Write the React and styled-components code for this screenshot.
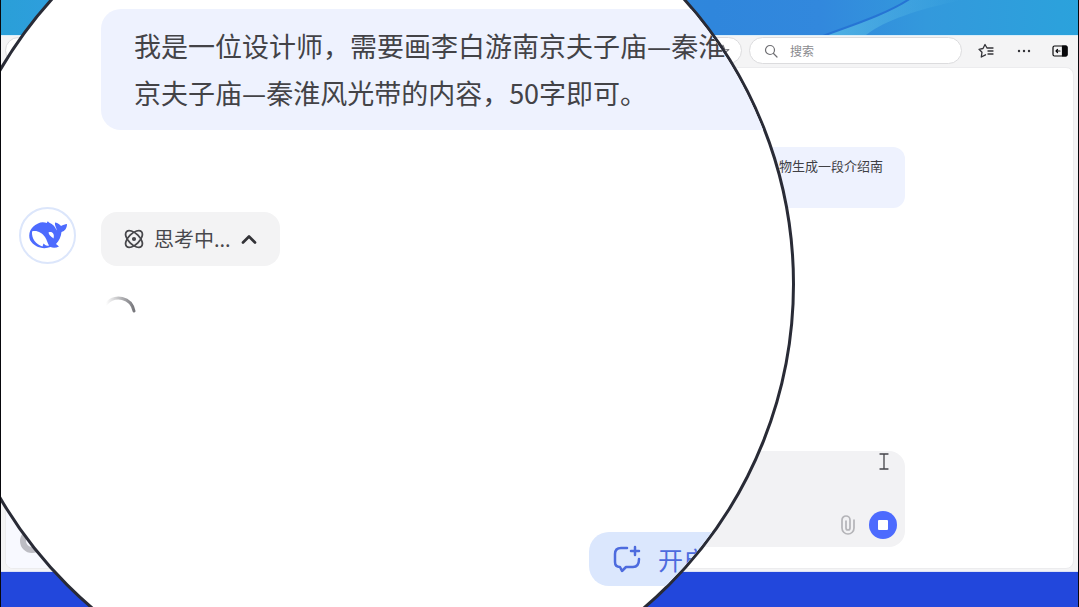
import React from "react";
import styled, { createGlobalStyle } from "styled-components";

const Global = createGlobalStyle`
  *, *::before, *::after { box-sizing: border-box; }
  html, body { margin: 0; }
  body, button, input, textarea {
    font-family: "Noto Sans CJK SC", "Noto Sans", sans-serif;
  }
  p { margin: 0; }
  svg { display: block; flex: none; }
`;

const Desktop = styled.div`
  position: relative;
  display: flex;
  flex-direction: column;
  min-height: 100vh;
  overflow: hidden;
  background: #2247dc;
  border: solid #08080c;
  border-width: 0 1px;
`;

const Wallpaper = styled.div`
  height: 35px;
  overflow: hidden;
  background: linear-gradient(90deg, #2a9fd8 0%, #2f9ede 6%, #2f86dc 66%, #3288dd 76%, #3399dc 86%, #2ba2dc 100%);
  svg { width: 100%; height: 100%; }
`;

const Browser = styled.div`
  flex: 1;
  display: flex;
  flex-direction: column;
  padding: 0 4px 2px;
  margin-bottom: 35px;
  background: #f4f4f5;
  border-top: 1px solid #d9eefa;
  border-bottom: 1px solid #dde2f5;
`;

const Toolbar = styled.header`
  display: flex;
  align-items: center;
  height: 31px;
  padding: 0 6px 2px 0;
`;

const AddressBar = styled.div`
  flex: 1;
  display: flex;
  align-items: center;
  justify-content: flex-end;
  height: 27px;
  margin-right: 7px;
  padding-right: 11px;
  background: #fff;
  border: 1px solid #dcdcde;
  border-radius: 14px;
`;

const SearchBox = styled.label`
  display: flex;
  align-items: center;
  gap: 12px;
  width: 213px;
  height: 27px;
  padding: 0 14px;
  background: #fff;
  border: 1px solid #dcdcde;
  border-radius: 14px;
  color: #6e6e72;
`;

const SearchInput = styled.input`
  flex: 1;
  min-width: 0;
  padding: 0;
  border: 0;
  outline: 0;
  background: none;
  font-size: 12px;
  &::placeholder { color: #8a8a8e; opacity: 1; }
`;

const IconButton = styled.button`
  display: flex;
  padding: 0;
  border: 0;
  background: none;
  color: ${(p) => p.$color || "#333338"};
`;

const Tools = styled.div`
  display: flex;
  align-items: center;
  gap: 20px;
  padding-left: 16px;
`;

const Page = styled.main`
  flex: 1;
  display: flex;
  background: #fff;
  border: 1px solid #ececee;
  border-radius: 8px;
  overflow: hidden;
`;

const Sidebar = styled.aside`
  display: flex;
  align-items: flex-end;
  width: 180px;
  padding: 0 0 15px 14px;
  background: #f8f9ff;
`;

const Account = styled.span`
  width: 24px;
  height: 24px;
  border: 6px solid #bdbdc4;
  border-radius: 50%;
`;

const Chat = styled.section`
  flex: 1;
  display: flex;
  flex-direction: column;
  justify-content: space-between;
  padding: 79px 168px 21px 80px;
`;

const Message = styled.p`
  height: 61px;
  padding: 8px 22px;
  background: #eef2fe;
  border-radius: 12px;
  color: #404044;
  font-size: 13px;
  line-height: 21px;
  text-align: right;
`;

const Composer = styled.form`
  display: flex;
  flex-direction: column;
  height: 96px;
  padding: 8px 8px 8px 20px;
  background: #f2f2f4;
  border-radius: 16px;
`;

const Prompt = styled.textarea`
  flex: 1;
  padding: 0;
  border: 0;
  outline: 0;
  resize: none;
  background: none;
  font-size: 13px;
`;

const Actions = styled.div`
  display: flex;
  align-items: center;
  justify-content: flex-end;
  gap: 13px;
`;

const StopButton = styled.button`
  display: grid;
  place-items: center;
  width: 28px;
  height: 28px;
  padding: 0;
  border: 0;
  border-radius: 50%;
  background: #4d6bfe;
  &::before {
    content: "";
    width: 10px;
    height: 10px;
    border-radius: 1px;
    background: #fff;
  }
`;

const Caret = styled.svg`
  position: absolute;
  top: 453px;
  right: 189px;
`;

const Lens = styled.div`
  position: absolute;
  top: -143px;
  left: -60px;
  width: 854px;
  height: 854px;
  padding: 149px 0 0 75px;
  overflow: hidden;
  background: #fff;
  border: 3px solid #292b36;
  border-radius: 50%;
`;

const LensMessage = styled.p`
  height: 121px;
  margin-left: 82px;
  padding: 13px 33px;
  background: #eef2fe;
  border-radius: 20px 0 0 20px;
  color: #434347;
  font-size: 27px;
  line-height: 47px;
  white-space: nowrap;
`;

const Reply = styled.div`
  display: flex;
  gap: 25px;
  margin-top: 77px;
`;

const Avatar = styled.span`
  display: grid;
  place-items: center;
  width: 57px;
  height: 57px;
  border: 2px solid #dce6fb;
  border-radius: 50%;
`;

const ReplyBody = styled.div`
  display: flex;
  flex-direction: column;
  align-items: flex-start;
  gap: 29px;
  padding-top: 5px;
`;

const ThinkingButton = styled.button`
  display: flex;
  align-items: center;
  gap: 10px;
  height: 54px;
  padding: 0 23px;
  border: 0;
  border-radius: 16px;
  background: #f3f3f4;
  color: #48484c;
  font-size: 20px;
  line-height: 30px;
`;

const NewChatButton = styled.button`
  display: flex;
  align-items: center;
  gap: 17px;
  width: 260px;
  height: 54px;
  margin: 217px 0 0 570px;
  padding: 0 24px;
  border: 0;
  border-radius: 20px;
  background: #dbe7fd;
  color: #4d6bde;
  font-size: 25px;
  line-height: 36px;
`;

const stroke = {
  fill: "none",
  stroke: "currentColor",
  strokeLinecap: "round",
  strokeLinejoin: "round",
};

const Whale = () => (
  <svg width="40" height="32" viewBox="0 0 40 32" aria-hidden="true">
    <path fill="#4d6bfe" d="M10 3.500C13 1.800 16 2 19 3C19 1.500 20 1 21 2.500C25 4 27.500 7 28.500 10.500C29 8 26.500 6 27 2.500C30 3 32 4.500 33 6C35 4.500 37 4.500 39 4C39 8 37 11 33.500 12C33 17 31 21 28 24L31 26.500C28 28 25 28 22.500 27C15 30 6 27 2 20C0 14 2 7 10 3.500Z" />
    <path fill="#fff" d="M4 11.500C9 10 14 13 17 17C19 20 19.500 23 21 25.500C18 26.500 17 24.500 15.500 23.500L14.500 26.500C8 24.500 3.500 19 4 11.500Z" />
    <path fill="#fff" d="M20.500 12.500C24 11 27 14 25.500 18.500C23.500 16.500 21.500 16 20.500 12.500Z" />
  </svg>
);

export default function App() {
  return (
    <>
      <Global />
      <Desktop>
        <Wallpaper>
          <svg viewBox="0 0 1077 35" preserveAspectRatio="none" aria-hidden="true">
            <defs>
              <linearGradient id="ray" x1="0" x2="1">
                <stop offset="0" stopColor="#52b6e4" stopOpacity=".9" />
                <stop offset="1" stopColor="#52b6e4" stopOpacity="0" />
              </linearGradient>
            </defs>
            <path fill="url(#ray)" d="M826 35C850 24 885 14 908 0H960C915 10 885 20 865 35Z" />
            <path fill="none" stroke="#2674d4" strokeWidth="2" d="M822 36C845 27 885 15 910 -2" />
          </svg>
        </Wallpaper>
        <Browser>
          <Toolbar>
            <AddressBar>
              <svg width="14" height="14" viewBox="0 0 24 24" color="#77777c" strokeWidth="2" {...stroke}>
                <path d="M12 2l3 7 7 .5-5.500 4.700L18 21l-6-4-6 4 1.500-6.800L2 9.500 9 9z" />
              </svg>
            </AddressBar>
            <SearchBox>
              <svg width="14" height="14" viewBox="0 0 14 14" strokeWidth="1.200" {...stroke} aria-hidden="true">
                <circle cx="6" cy="6" r="4.500" /><path d="M9.500 9.500L13 13" />
              </svg>
              <SearchInput aria-label="搜索" placeholder="搜索" />
            </SearchBox>
            <Tools>
              <IconButton aria-label="收藏夹">
                <svg width="17" height="16" viewBox="0 0 17 16" strokeWidth="1.300" {...stroke}>
                  <path d="M9 5L7 1.500 5 5.500 1 6.300 4 9.200 3.300 14 7.500 11.800M9 5H15M10 8H15M10 11H15" />
                </svg>
              </IconButton>
              <IconButton aria-label="更多">
                <svg width="17" height="16" viewBox="0 0 17 16" fill="currentColor">
                  <circle cx="4" cy="8" r="1.200" /><circle cx="9" cy="8" r="1.200" /><circle cx="14" cy="8" r="1.200" />
                </svg>
              </IconButton>
              <IconButton aria-label="侧边栏" $color="#08080a">
                <svg width="16" height="16" viewBox="0 0 16 16" strokeWidth="1.200" {...stroke}>
                  <rect x="1" y="3" width="14" height="10" rx="1.500" />
                  <path fill="currentColor" d="M10.500 3H14L15 4V12L14 13H10.500Z" />
                  <path d="M8 8H4M5.500 6.500L4 8L5.500 9.500" />
                </svg>
              </IconButton>
            </Tools>
          </Toolbar>
          <Page>
            <Sidebar><Account /></Sidebar>
            <Chat>
              <Message>物生成一段介绍南</Message>
              <Composer>
                <Prompt aria-label="消息" />
                <Actions>
                  <IconButton type="button" aria-label="附件" $color="#b4b4b8">
                    <svg width="16" height="20" viewBox="0 0 16 20" strokeWidth="1.700" {...stroke}>
                      <path d="M14 5V13a6 6 0 0 1-12 0V5a4 4 0 0 1 8 0v8a2 2 0 0 1-4 0V6" />
                    </svg>
                  </IconButton>
                  <StopButton type="button" aria-label="停止" />
                </Actions>
              </Composer>
            </Chat>
          </Page>
        </Browser>

        <Caret width="10" height="17" viewBox="0 0 10 17" color="#44444a" strokeWidth="1.300" {...stroke} aria-hidden="true">
          <path d="M1 1H9M5 1V16M1 16H9" />
        </Caret>

        <Lens>
          <LensMessage>
            我是一位设计师，需要画李白游南京夫子庙—秦淮
            <br />
            京夫子庙—秦淮风光带的内容，50字即可。
          </LensMessage>
          <Reply>
            <Avatar><Whale /></Avatar>
            <ReplyBody>
              <ThinkingButton>
                <svg width="20" height="20" viewBox="0 0 20 20" strokeWidth="1.800" {...stroke} aria-hidden="true">
                  <ellipse cx="10" cy="10" rx="10.500" ry="5.500" transform="rotate(45 10 10)" />
                  <ellipse cx="10" cy="10" rx="10.500" ry="5.500" transform="rotate(-45 10 10)" />
                  <circle cx="10" cy="10" r="1.200" fill="currentColor" />
                </svg>
                思考中...
                <svg width="16" height="12" viewBox="0 0 16 12" color="#333337" strokeWidth="2.700" {...stroke} aria-hidden="true">
                  <path d="M2 9.500L8 3.500L14 9.500" />
                </svg>
              </ThinkingButton>
              <svg width="36" height="20" viewBox="0 0 36 20" role="img" aria-label="加载中">
                <defs>
                  <linearGradient id="fade" x1="0" x2="1">
                    <stop offset="0" stopColor="#77777c" stopOpacity="0" />
                    <stop offset="1" stopColor="#77777c" />
                  </linearGradient>
                </defs>
                <path fill="none" stroke="url(#fade)" strokeWidth="3" strokeLinecap="round" d="M5 9C14 -1 30 2 33 16" />
              </svg>
            </ReplyBody>
          </Reply>
          <NewChatButton>
            <svg width="28" height="28" viewBox="0 0 28 28" strokeWidth="2.500" {...stroke} aria-hidden="true">
              <path d="M14 3H8Q2 3 2 9V17Q2 22 7 22L9 26L13 22H20Q26 22 26 14M22 2V10M18 6H26" />
            </svg>
            开启
          </NewChatButton>
        </Lens>
      </Desktop>
    </>
  );
}
